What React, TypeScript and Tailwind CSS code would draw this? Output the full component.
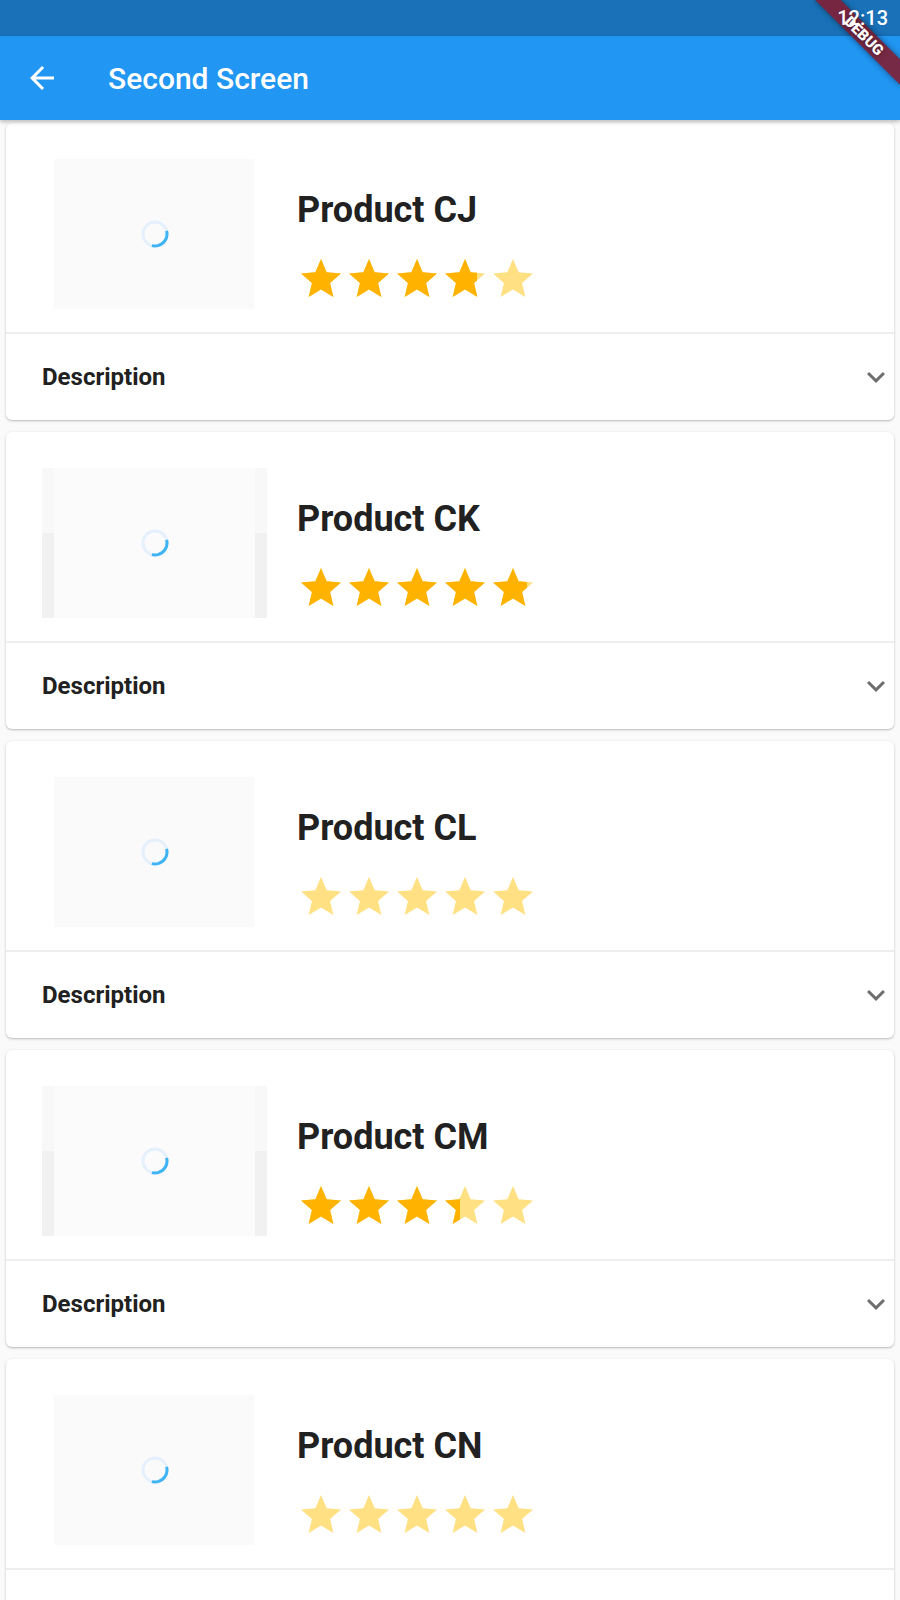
type Product = { name: string; rating: number; wide: boolean }

const PRODUCTS: Product[] = [
  { name: 'Product CJ', rating: 3.75, wide: false },
  { name: 'Product CK', rating: 4.8, wide: true },
  { name: 'Product CL', rating: 0, wide: false },
  { name: 'Product CM', rating: 3.4, wide: true },
  { name: 'Product CN', rating: 0, wide: false },
]

// material "star" glyph
const STAR = 'M12 17.27L18.18 21l-1.64-7.03L22 9.24l-7.19-.61L12 2 9.19 8.63 2 9.24l5.46 4.73L5.82 21z'

function Star({ fill }: { fill: number }) {
  return (
    <div className="relative w-[48px] h-[48px] shrink-0">
      <svg viewBox="0 0 24 24" className="w-[48px] h-[48px]">
        <path d={STAR} fill="#ffe082" />
      </svg>
      {fill > 0 && (
        <div className="absolute top-0 left-0 h-[48px] overflow-hidden" style={{ width: fill * 48 }}>
          <svg viewBox="0 0 24 24" className="w-[48px] h-[48px] shrink-0">
            <path d={STAR} fill="#ffb300" />
          </svg>
        </div>
      )}
    </div>
  )
}

function Rating({ value }: { value: number }) {
  return (
    <div className="flex">
      {[0, 1, 2, 3, 4].map(i => (
        <Star key={i} fill={Math.max(0, Math.min(1, value - i))} />
      ))}
    </div>
  )
}

function Spinner() {
  return (
    <svg width="28" height="28" viewBox="0 0 28 28">
      <circle cx="14" cy="14" r="12" fill="none" stroke="#e5f0fc" strokeWidth="3" />
      <circle
        cx="14"
        cy="14"
        r="12"
        fill="none"
        stroke="#3fb4f5"
        strokeWidth="3"
        strokeDasharray="25 100"
        transform="rotate(-15 14 14)"
      />
    </svg>
  )
}

function Thumb({ wide }: { wide: boolean }) {
  return (
    <div className="relative w-[225px] h-[150px] shrink-0 flex items-center justify-center">
      {wide ? (
        <div className="absolute inset-0 bg-[#f8f8f8]">
          <div className="absolute top-[65px] bottom-0 left-0 w-[12px] bg-[#f1f1f1]" />
          <div className="absolute top-[65px] bottom-0 right-0 w-[12px] bg-[#f1f1f1]" />
          <div className="absolute inset-y-0 left-[12px] right-[12px] bg-[#fbfbfb]" />
        </div>
      ) : (
        <div className="absolute inset-y-0 left-[12px] right-[13px] bg-[#fafafa]" />
      )}
      <div className="relative">
        <Spinner />
      </div>
    </div>
  )
}

function ProductCard({ product }: { product: Product }) {
  return (
    <div className="bg-white rounded-[6px] shadow-[0_1px_2px_rgba(0,0,0,0.22),0_1px_4px_rgba(0,0,0,0.06)] shrink-0">
      <div className="h-[209px] flex items-start pl-[36px] pt-[36px]">
        <Thumb wide={product.wide} />
        <div className="ml-[30px] mt-[30px] flex flex-col">
          <div className="text-[36px] leading-[42px] font-bold text-[#212121]">{product.name}</div>
          <div className="mt-[24px]">
            <Rating value={product.rating} />
          </div>
        </div>
      </div>
      <div className="h-[2px] bg-[#eeeeee]" />
      <div className="h-[86px] flex items-center justify-between pl-[36px]">
        <span className="text-[24px] font-bold text-[#212121]">Description</span>
        <svg viewBox="0 0 24 24" className="w-[36px] h-[36px]">
          <path d="M16.59 8.59L12 13.17 7.41 8.59 6 10l6 6 6-6z" fill="#6e6e6e" />
        </svg>
      </div>
    </div>
  )
}

export default function App() {
  return (
    <div className="relative w-[900px] h-[1600px] overflow-hidden bg-[#fafafa] font-['Roboto',sans-serif]">
      {/* status bar */}
      <div className="h-[36px] bg-[#1a71b8] flex items-center justify-end pr-[12px]">
        <span className="relative z-30 text-white text-[20px] font-medium">12:13</span>
      </div>

      {/* app bar */}
      <header className="relative z-10 h-[84px] bg-[#2196f3] flex items-center pl-[24px] shadow-[0_2px_4px_rgba(0,0,0,0.25)]">
        <svg viewBox="0 0 24 24" className="w-[36px] h-[36px]">
          <path d="M20 11H7.83l5.59-5.59L12 4l-8 8 8 8 1.41-1.41L7.83 13H20v-2z" fill="#ffffff" />
        </svg>
        <span className="ml-[48px] text-[30px] font-medium text-white">Second Screen</span>
      </header>

      {/* debug ribbon */}
      <div className="absolute z-20 top-[27px] left-[804px] w-[120px] h-[18px] rotate-45 bg-[#7f1f35e8] flex items-center justify-center shadow-[0_0_6px_rgba(0,0,0,0.45)]">
        <span className="text-white text-[15px] leading-none font-black [text-shadow:0_0_6px_rgba(0,0,0,0.5)]">DEBUG</span>
      </div>

      <div className="flex flex-col gap-[12px] px-[6px] pt-[3px]">
        {PRODUCTS.map(p => (
          <ProductCard key={p.name} product={p} />
        ))}
      </div>
    </div>
  )
}
